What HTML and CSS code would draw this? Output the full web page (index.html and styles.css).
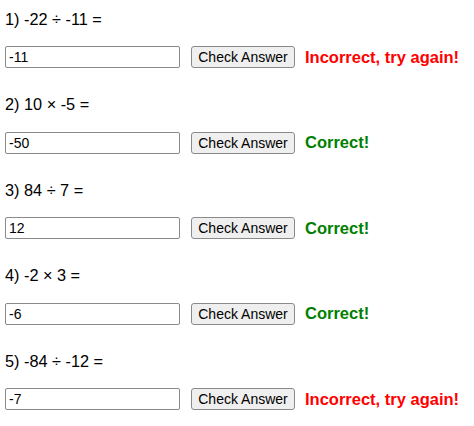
FILE: index.html
```html
<!DOCTYPE html>
<html>
<head>
<meta charset="utf-8">
<link rel="stylesheet" href="styles.css">
</head>
<body>
<div class="quiz">
  <div class="problem">
    <p class="question">1) -22 ÷ -11 =</p>
    <div class="answer-row">
      <input class="answer" type="text" value="-11">
      <button class="check">Check Answer</button>
      <span class="feedback wrong">Incorrect, try again!</span>
    </div>
  </div>
  <div class="problem">
    <p class="question">2) 10 × -5 =</p>
    <div class="answer-row">
      <input class="answer" type="text" value="-50">
      <button class="check">Check Answer</button>
      <span class="feedback right">Correct!</span>
    </div>
  </div>
  <div class="problem">
    <p class="question">3) 84 ÷ 7 =</p>
    <div class="answer-row">
      <input class="answer" type="text" value="12">
      <button class="check">Check Answer</button>
      <span class="feedback right">Correct!</span>
    </div>
  </div>
  <div class="problem">
    <p class="question">4) -2 × 3 =</p>
    <div class="answer-row">
      <input class="answer" type="text" value="-6">
      <button class="check">Check Answer</button>
      <span class="feedback right">Correct!</span>
    </div>
  </div>
  <div class="problem">
    <p class="question">5) -84 ÷ -12 =</p>
    <div class="answer-row">
      <input class="answer" type="text" value="-7">
      <button class="check">Check Answer</button>
      <span class="feedback wrong">Incorrect, try again!</span>
    </div>
  </div>
</div>
</body>
</html>
```
FILE: styles.css
```css
html, body {
  margin: 0;
  padding: 0;
  background: #fff;
}
body {
  font-family: "Liberation Sans", Arial, sans-serif;
  color: #000;
}
.quiz {
  display: flex;
  flex-direction: column;
  padding: 9.5px 5px 0 5px;
}
.problem {
  display: flex;
  flex-direction: column;
  height: 85.5px;
}
.question {
  margin: 0;
  font-size: 16.3px;
  line-height: 18px;
  height: 18px;
}
.answer-row {
  display: flex;
  align-items: center;
  margin-top: 18.5px;
  height: 22px;
}
.answer {
  box-sizing: border-box;
  width: 175px;
  height: 22px;
  margin: 0;
  padding: 0 3px;
  border: 1px solid #8a8a8a;
  border-radius: 2px;
  font-family: "Liberation Sans", Arial, sans-serif;
  font-size: 14px;
  color: #000;
  background: #fff;
}
.check {
  box-sizing: border-box;
  margin: 0 0 0 11px;
  width: 104px;
  height: 22px;
  padding: 0;
  border: 1px solid #8a8a8a;
  border-radius: 3px;
  background: #efefef;
  font-family: "Liberation Sans", Arial, sans-serif;
  font-size: 14px;
  color: #000;
}
.feedback {
  margin-left: 10px;
  font-weight: bold;
  font-size: 16.5px;
}
.wrong { color: #ff0000; }
.right { color: #008000; }
```
